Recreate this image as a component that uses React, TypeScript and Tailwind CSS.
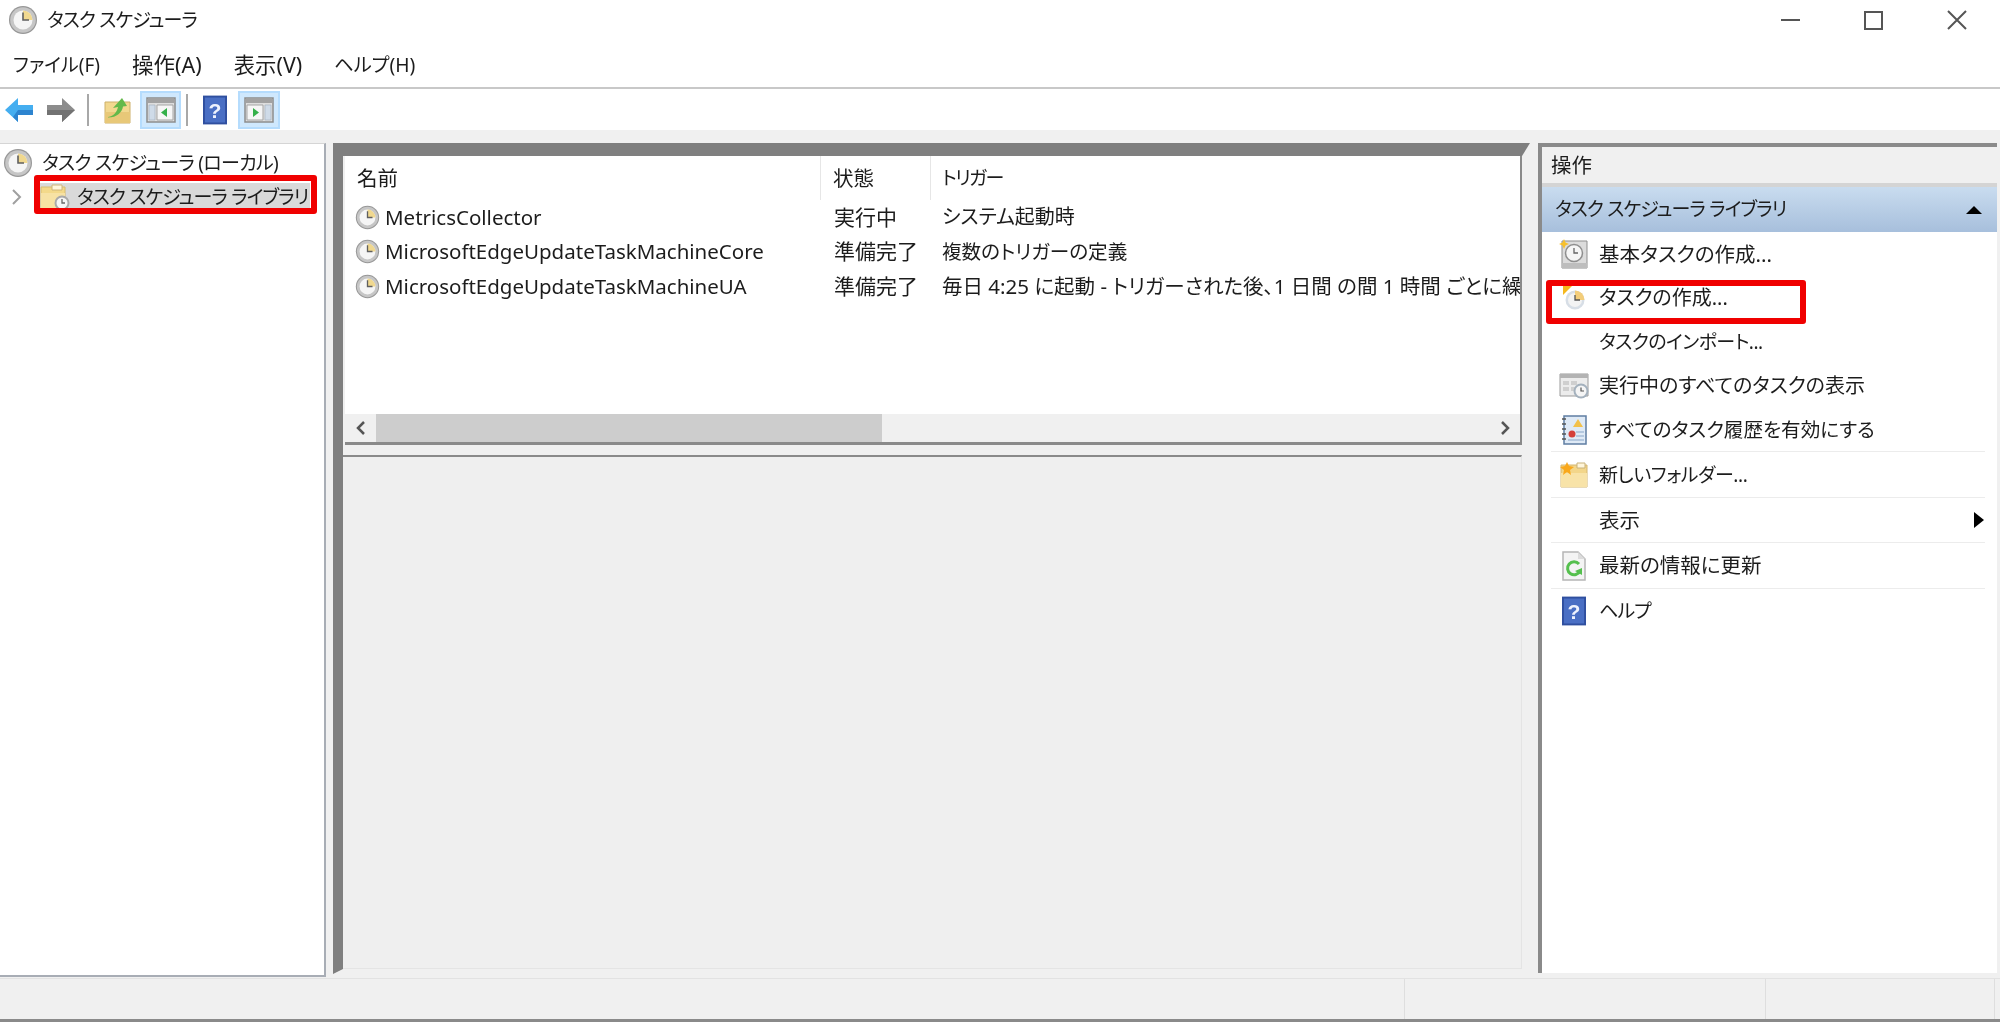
import type { ReactNode } from 'react';

const ClockIcon = ({ size = 30 }: { size?: number }) => (
  <svg width={size} height={size} viewBox="0 0 30 30" className="shrink-0">
    <circle cx="15" cy="15" r="14" fill="#979797" />
    <circle cx="15" cy="15" r="12.800" fill="#c6c6c6" />
    <circle cx="15" cy="15" r="9.500" fill="#f5f5f5" />
    <path d="M15 5.500a9.500 9.500 0 0 1 9.500 9.500H15z" fill="#f0d88f" />
    <path d="M15 7.500V15h6" fill="none" stroke="#5f5f5f" strokeWidth="1.600" />
  </svg>
);

const LibraryFolderIcon = () => (
  <svg width="30" height="28" viewBox="0 0 30 28" className="shrink-0">
    <path d="M1 4h24v21H1z" fill="#f3d98a" stroke="#d8bc70" />
    <path d="M1 10h24v15H1z" fill="#f7e2a4" />
    <path d="M12 2h10v5H12z" fill="#fff7dd" stroke="#cdb57a" />
    <circle cx="22" cy="20" r="7.500" fill="#a9a9a9" />
    <circle cx="22" cy="20" r="5.500" fill="#f5f5f5" />
    <path d="M22 16v4h3" fill="none" stroke="#666" strokeWidth="1.300" />
  </svg>
);

const BackArrow = () => (
  <svg width="30" height="28" viewBox="0 0 30 28">
    <path d="M1 14 14 2v7h15v10H14v7z" fill="#45aef0" />
    <path d="M14 14h15v5H14v7l-5-5z" fill="#2d84cf" />
  </svg>
);

const ForwardArrow = () => (
  <svg width="30" height="28" viewBox="0 0 30 28">
    <path d="M29 14 16 2v7H1v10h15v7z" fill="#8c8c8c" />
    <path d="M1 14h28L16 26v-7H1z" fill="#727272" />
  </svg>
);

const FolderUpIcon = () => (
  <svg width="28" height="28" viewBox="0 0 28 28">
    <path d="M1 6h25v21H1z" fill="#f2d88f" stroke="#cdb06a" />
    <path d="M1 16h25v11H1z" fill="#e8c878" />
    <path d="M4 21c6-1 9-5 10-10l-5 1 9-10 5 8-4 .5c-1 6-6 11-15 11z" fill="#63b94a" />
  </svg>
);

const PaneIcon = ({ side }: { side: 'left' | 'right' }) => (
  <svg width="30" height="26" viewBox="0 0 30 26">
    <path d="M1 1h28v24H1z" fill="#dedede" stroke="#8d8d8d" strokeWidth="1.500" />
    <path d="M2 2h26v4H2z" fill="#a2a2a2" />
    {side === 'left' ? (
      <>
        <path d="M3 8h6v15H3z" fill="#cfdbe8" stroke="#a8b5c2" strokeWidth=".7" />
        <path d="M11 8h16v15H11z" fill="#f6f6f6" stroke="#a5a5a5" />
        <path d="M21 11v9l-6-4.500z" fill="#35b04a" />
      </>
    ) : (
      <>
        <path d="M21 8h6v15h-6z" fill="#cfdbe8" stroke="#a8b5c2" strokeWidth=".7" />
        <path d="M3 8h16v15H3z" fill="#f6f6f6" stroke="#a5a5a5" />
        <path d="M9 11v9l6-4.500z" fill="#35b04a" />
      </>
    )}
  </svg>
);

const HelpIcon = ({ w = 25, h = 30 }: { w?: number; h?: number }) => (
  <svg width={w} height={h} viewBox="0 0 25 30" className="shrink-0">
    <path d="M0 0h25v30H0z" fill="#2f4f9f" />
    <path d="M2 2h21v26H2z" fill="#4a6fc4" />
    <text x="12.500" y="23" textAnchor="middle" fontSize="22" fontWeight="700" fontFamily="Liberation Sans, sans-serif" fill="#eef2fd">?</text>
  </svg>
);

const BasicTaskIcon = () => (
  <svg width="30" height="30" viewBox="0 0 30 30">
    <path d="M3 2h25v27H3z" fill="#dcdcdc" stroke="#8f8f8f" />
    <circle cx="15" cy="14" r="8.500" fill="#f6f6f6" stroke="#8e8e8e" strokeWidth="1.500" />
    <path d="M15 9v5h4" fill="none" stroke="#666" strokeWidth="1.300" />
    <path d="M3 24h25v5H3z" fill="#bdbdbd" />
    <path d="m5 0 1.500 3.500L10 5 6.500 6.500 5 10 3.500 6.500 0 5l3.500-1.500z" fill="#f7c02e" />
  </svg>
);

const CreateTaskIcon = () => (
  <svg width="24" height="24" viewBox="0 0 24 24">
    <circle cx="13" cy="14" r="9.500" fill="#d7dee6" />
    <circle cx="13" cy="14" r="7" fill="#f3f3f3" />
    <path d="M13 4.500a9.500 9.500 0 0 1 9.500 9.500H13z" fill="#f3cd7a" />
    <path d="M13 9v5h5" fill="none" stroke="#555" strokeWidth="1.300" />
    <path d="M1 0h9L1 9z" fill="#f5b81d" />
  </svg>
);

const RunningTasksIcon = () => (
  <svg width="30" height="26" viewBox="0 0 30 26">
    <path d="M1 1h28v22H1z" fill="#ececec" stroke="#9b9b9b" />
    <path d="M1 1h28v4H1z" fill="#b3b3b3" />
    <path d="M4 8h6v4H4zM12 8h6v4h-6zM4 14h6v4H4zM12 14h6v4h-6z" fill="#cfcfcf" />
    <circle cx="22" cy="18" r="7.500" fill="#a4b1bd" />
    <circle cx="22" cy="18" r="5.500" fill="#f5f5f5" />
    <path d="M22 14.500V18h3" fill="none" stroke="#555" strokeWidth="1.200" />
  </svg>
);

const HistoryIcon = () => (
  <svg width="26" height="30" viewBox="0 0 26 30">
    <path d="M3 1h22v28H3z" fill="#dfeaf6" stroke="#5f7ea3" strokeWidth="1.500" />
    <path d="M1 4h4M1 9h4M1 14h4M1 19h4M1 24h4" stroke="#555" strokeWidth="1.500" />
    <path d="m17 4 5 8H12z" fill="#f2c14b" />
    <circle cx="11" cy="19" r="3.500" fill="#d4403a" />
    <path d="M15 17h8M15 21h8M7 25h16" stroke="#8aa6c7" strokeWidth="1.200" />
  </svg>
);

const NewFolderIcon = () => (
  <svg width="28" height="26" viewBox="0 0 28 26">
    <path d="M1 3h26v22H1z" fill="#f3d68a" stroke="#d4b670" />
    <path d="M1 11h26v14H1z" fill="#f8e3a8" />
    <path d="M17 1h8v5h-8z" fill="#fff6dc" stroke="#c9b27a" />
    <path d="m7 0 2 4 5 1-4 3 1 5-4-3-4 3 1-5-4-3 5-1z" fill="#f9a81c" />
  </svg>
);

const RefreshIcon = () => (
  <svg width="26" height="30" viewBox="0 0 26 30">
    <path d="M2 1h15l7 7v21H2z" fill="#f4f4f4" stroke="#b5b5b5" strokeWidth="1.500" />
    <path d="M17 1v7h7z" fill="#dcdcdc" />
    <path d="M19 20a6.500 6.500 0 1 1-1-7" fill="none" stroke="#55c04e" strokeWidth="3" />
    <path d="m14 20 7 4v-7z" fill="#55c04e" />
  </svg>
);

const PaneChevron = ({ d }: { d: string }) => (
  <svg width="12" height="14" viewBox="0 0 12 14">
    <path d={d} fill="none" stroke="#555" strokeWidth="2.500" />
  </svg>
);

const tasks = [
  { name: 'MetricsCollector', status: '実行中', trigger: 'システム起動時', size: 'text-[20px]' },
  { name: 'MicrosoftEdgeUpdateTaskMachineCore', status: '準備完了', trigger: '複数のトリガーの定義', size: 'text-[19.600px]' },
  {
    name: 'MicrosoftEdgeUpdateTaskMachineUA',
    status: '準備完了',
    trigger: '毎日 4:25 に起動 - トリガーされた後、1 日間 の間 1 時間 ごとに繰り返し',
    size: 'text-[20.500px]',
  },
];

const ActionRow = ({
  icon,
  label,
  arrow,
  line,
  tall,
  size,
}: {
  icon?: ReactNode;
  label: string;
  arrow?: boolean;
  line?: boolean;
  tall?: boolean;
  size?: string;
}) => (
  <div className={`relative flex items-center ${tall ? 'h-[45.500px]' : 'h-[44px]'}`}>
    <div className="flex w-[45px] shrink-0 items-center justify-center pl-[3px]">{icon}</div>
    <span className={`ml-[4px] ${size ?? ''}`}>{label}</span>
    {arrow && <i className="ml-auto mr-[13px] h-0 w-0 border-y-[8px] border-l-[10px] border-y-transparent border-l-black" />}
    {line && <div className="absolute bottom-0 left-[1px] right-[12px] h-px bg-[#ececec]" />}
  </div>
);

export default function App() {
  return (
    <div className="flex h-[1022px] w-[2000px] flex-col overflow-hidden bg-white font-['Noto_Sans','Noto_Sans_CJK_JP',sans-serif] text-[20.500px] text-[#1c1c1c] [font-feature-settings:'palt'] blur-[0.7px]">
      {/* Title bar */}
      <div className="flex h-[40px] items-center pl-[8px]">
        <ClockIcon />
        <span className="ml-[9px] text-[19px] tracking-[-0.9px]">タスク スケジューラ</span>
        <div className="ml-auto flex items-center pr-[33px]">
          <div className="h-[2px] w-[19px] bg-[#555]" />
          <div className="ml-[64px] h-[19px] w-[19px] border-2 border-[#555]" />
          <svg width="20" height="20" viewBox="0 0 20 20" className="ml-[64px]">
            <path d="m1 1 18 18M19 1 1 19" stroke="#555" strokeWidth="2" />
          </svg>
        </div>
      </div>

      {/* Menu */}
      <div className="flex h-[49px] items-center gap-[32px] border-b-2 border-[#c8c8c8] pt-[4px] pl-[13px]">
        <span className="text-[19px]">ファイル(F)</span>
        <span className="text-[21.500px]">操作(A)</span>
        <span className="text-[21.400px]">表示(V)</span>
        <span className="text-[19.300px]">ヘルプ(H)</span>
      </div>

      {/* Toolbar */}
      <div className="flex h-[41px] items-center pl-[4px]">
        <BackArrow />
        <div className="ml-[12px]"><ForwardArrow /></div>
        <div className="ml-[11px] h-[32px] w-[2px] bg-[#a8a8a8]" />
        <div className="ml-[15px]"><FolderUpIcon /></div>
        <div className="ml-[8px] flex h-[38px] w-[41px] items-center justify-center border-2 border-[#b5dcfd] bg-[#cfe8fd]"><PaneIcon side="left" /></div>
        <div className="ml-[5px] h-[32px] w-[2px] bg-[#a8a8a8]" />
        <div className="ml-[15px]"><HelpIcon w={24} h={30} /></div>
        <div className="ml-[11px] flex h-[38px] w-[42px] items-center justify-center border-2 border-[#b5dcfd] bg-[#cfe8fd]"><PaneIcon side="right" /></div>
      </div>

      {/* Panels */}
      <div className="flex h-[848px] bg-[#f0f0f0] pt-[13px]">
        {/* Tree */}
        <div className="h-[834px] w-[326px] shrink-0 border-t border-r-2 border-b-2 border-t-[#d5d5d5] border-r-[#a8adb5] border-b-[#a8adb5] bg-white">
          <div className="flex h-[37px] items-center pl-[3px] pt-[1px]">
            <ClockIcon />
            <span className="ml-[9px] text-[19px] tracking-[-0.7px]">タスク スケジューラ (ローカル)</span>
          </div>
          <div className="relative flex h-[32px] items-center">
            <svg width="12" height="16" viewBox="0 0 12 16" className="ml-[11px]">
              <path d="m2 1 7 7-7 7" fill="none" stroke="#a0a0a0" strokeWidth="2" />
            </svg>
            <div className="ml-[17px] flex h-[28px] w-[270px] items-center bg-[#d9d9d9]">
              <LibraryFolderIcon />
              <span className="ml-[7px] whitespace-nowrap text-[19px] tracking-[-0.9px]">タスク スケジューラ ライブラリ</span>
            </div>
            <div className="absolute left-[34px] top-[-6px] h-[39px] w-[283px] rounded-[3px] border-[6px] border-[#f00000]" />
          </div>
        </div>

        {/* Center */}
        <div className="ml-[7px] flex h-[831px] w-[1197px] shrink-0 flex-col border-t-[13px] border-r-[8px] border-b-[5px] border-l-[10px] border-t-[#7f7f7f] border-r-[#f0f0f0] border-b-[#f0f0f0] border-l-[#7f7f7f]">
          <div className="ml-[2px] flex h-[289px] shrink-0 flex-col border-r-[2px] border-b-[3px] border-[#8a8a8a] bg-white">
            <div className="flex h-[44px] shrink-0">
              <div className="flex w-[476px] shrink-0 items-center border-r border-[#e6e6e6] pl-[12px]">名前</div>
              <div className="flex w-[110px] shrink-0 items-center border-r border-[#e6e6e6] pl-[12px]">状態</div>
              <div className="flex items-center pl-[11px] text-[19px] tracking-[-1.6px]">トリガー</div>
            </div>
            <div className="flex-1 overflow-hidden">
              {tasks.map((t) => (
                <div key={t.name} className="flex h-[34.500px] items-center whitespace-nowrap">
                  <div className="flex w-[476px] shrink-0 items-center pl-[10px]">
                    <ClockIcon size={25} />
                    <span className="ml-[5px]">{t.name}</span>
                  </div>
                  <div className="w-[110px] shrink-0 pl-[13px] text-[21px]">{t.status}</div>
                  <div className={`pl-[11px] ${t.size}`}>{t.trigger}</div>
                </div>
              ))}
            </div>
            <div className="flex h-[28px] shrink-0 items-center bg-[#f0f0f0]">
              <div className="flex h-full w-[31px] items-center justify-center">
                <PaneChevron d="M9 1 3 7l6 6" />
              </div>
              <div className="h-full w-[506px] bg-[#cdcdcd]" />
              <div className="ml-auto flex h-full w-[31px] items-center justify-center">
                <PaneChevron d="m3 1 6 6-6 6" />
              </div>
            </div>
          </div>
          <div className="mt-[10px] flex-1 border-t-[2px] border-r border-b border-t-[#8a8a8a] border-r-[#e4e4e4] border-b-[#e4e4e4] bg-[#efefef]" />
        </div>

        {/* Actions */}
        <div className="ml-[8px] flex h-[830px] w-[459px] shrink-0 flex-col border-t-[4px] border-l-[4px] border-[#8a8a8a]">
          <div className="flex h-[36px] shrink-0 items-center bg-[#f0f0f0] pl-[9px]">操作</div>
          <div className="h-[4px] shrink-0 bg-[#d4d4d4]" />
          <div className="flex h-[45px] shrink-0 items-center bg-gradient-to-b from-[#c9dcef] to-[#a7bfdc] pl-[13px] pr-[15px]">
            <span className="text-[19px] tracking-[-0.9px]">タスク スケジューラ ライブラリ</span>
            <i className="ml-auto h-0 w-0 border-x-[8px] border-b-[8px] border-x-transparent border-b-black" />
          </div>
          <div className="relative flex-1 bg-white pl-[8px]">
            <ActionRow icon={<BasicTaskIcon />} label="基本タスクの作成..." />
            <ActionRow icon={<CreateTaskIcon />} label="タスクの作成..." size="text-[20px]" />
            <ActionRow label="タスクのインポート..." size="text-[19px] tracking-[-0.5px]" />
            <ActionRow icon={<RunningTasksIcon />} label="実行中のすべてのタスクの表示" size="text-[20px]" />
            <ActionRow icon={<HistoryIcon />} label="すべてのタスク履歴を有効にする" size="text-[19.600px]" line />
            <ActionRow tall icon={<NewFolderIcon />} label="新しいフォルダー..." size="text-[19px] tracking-[-0.4px]" line />
            <ActionRow tall label="表示" arrow line />
            <ActionRow tall icon={<RefreshIcon />} label="最新の情報に更新" line />
            <ActionRow tall icon={<HelpIcon w={24} h={30} />} label="ヘルプ" size="text-[19px] tracking-[-0.9px]" />
            <div className="absolute left-[4px] top-[48px] h-[44px] w-[260px] rounded-[3px] border-[6px] border-[#f00000]" />
          </div>
        </div>
      </div>

      {/* Status bar */}
      <div className="flex h-[44px] border-t border-b-[3px] border-t-[#e2e2e2] border-b-[#8a8a8a] bg-[#f0f0f0]">
        <div className="w-[1405px] border-r border-[#dedede]" />
        <div className="w-[361px] border-r border-[#dedede]" />
        <div className="w-[229px] border-r border-[#dedede]" />
      </div>
    </div>
  );
}
